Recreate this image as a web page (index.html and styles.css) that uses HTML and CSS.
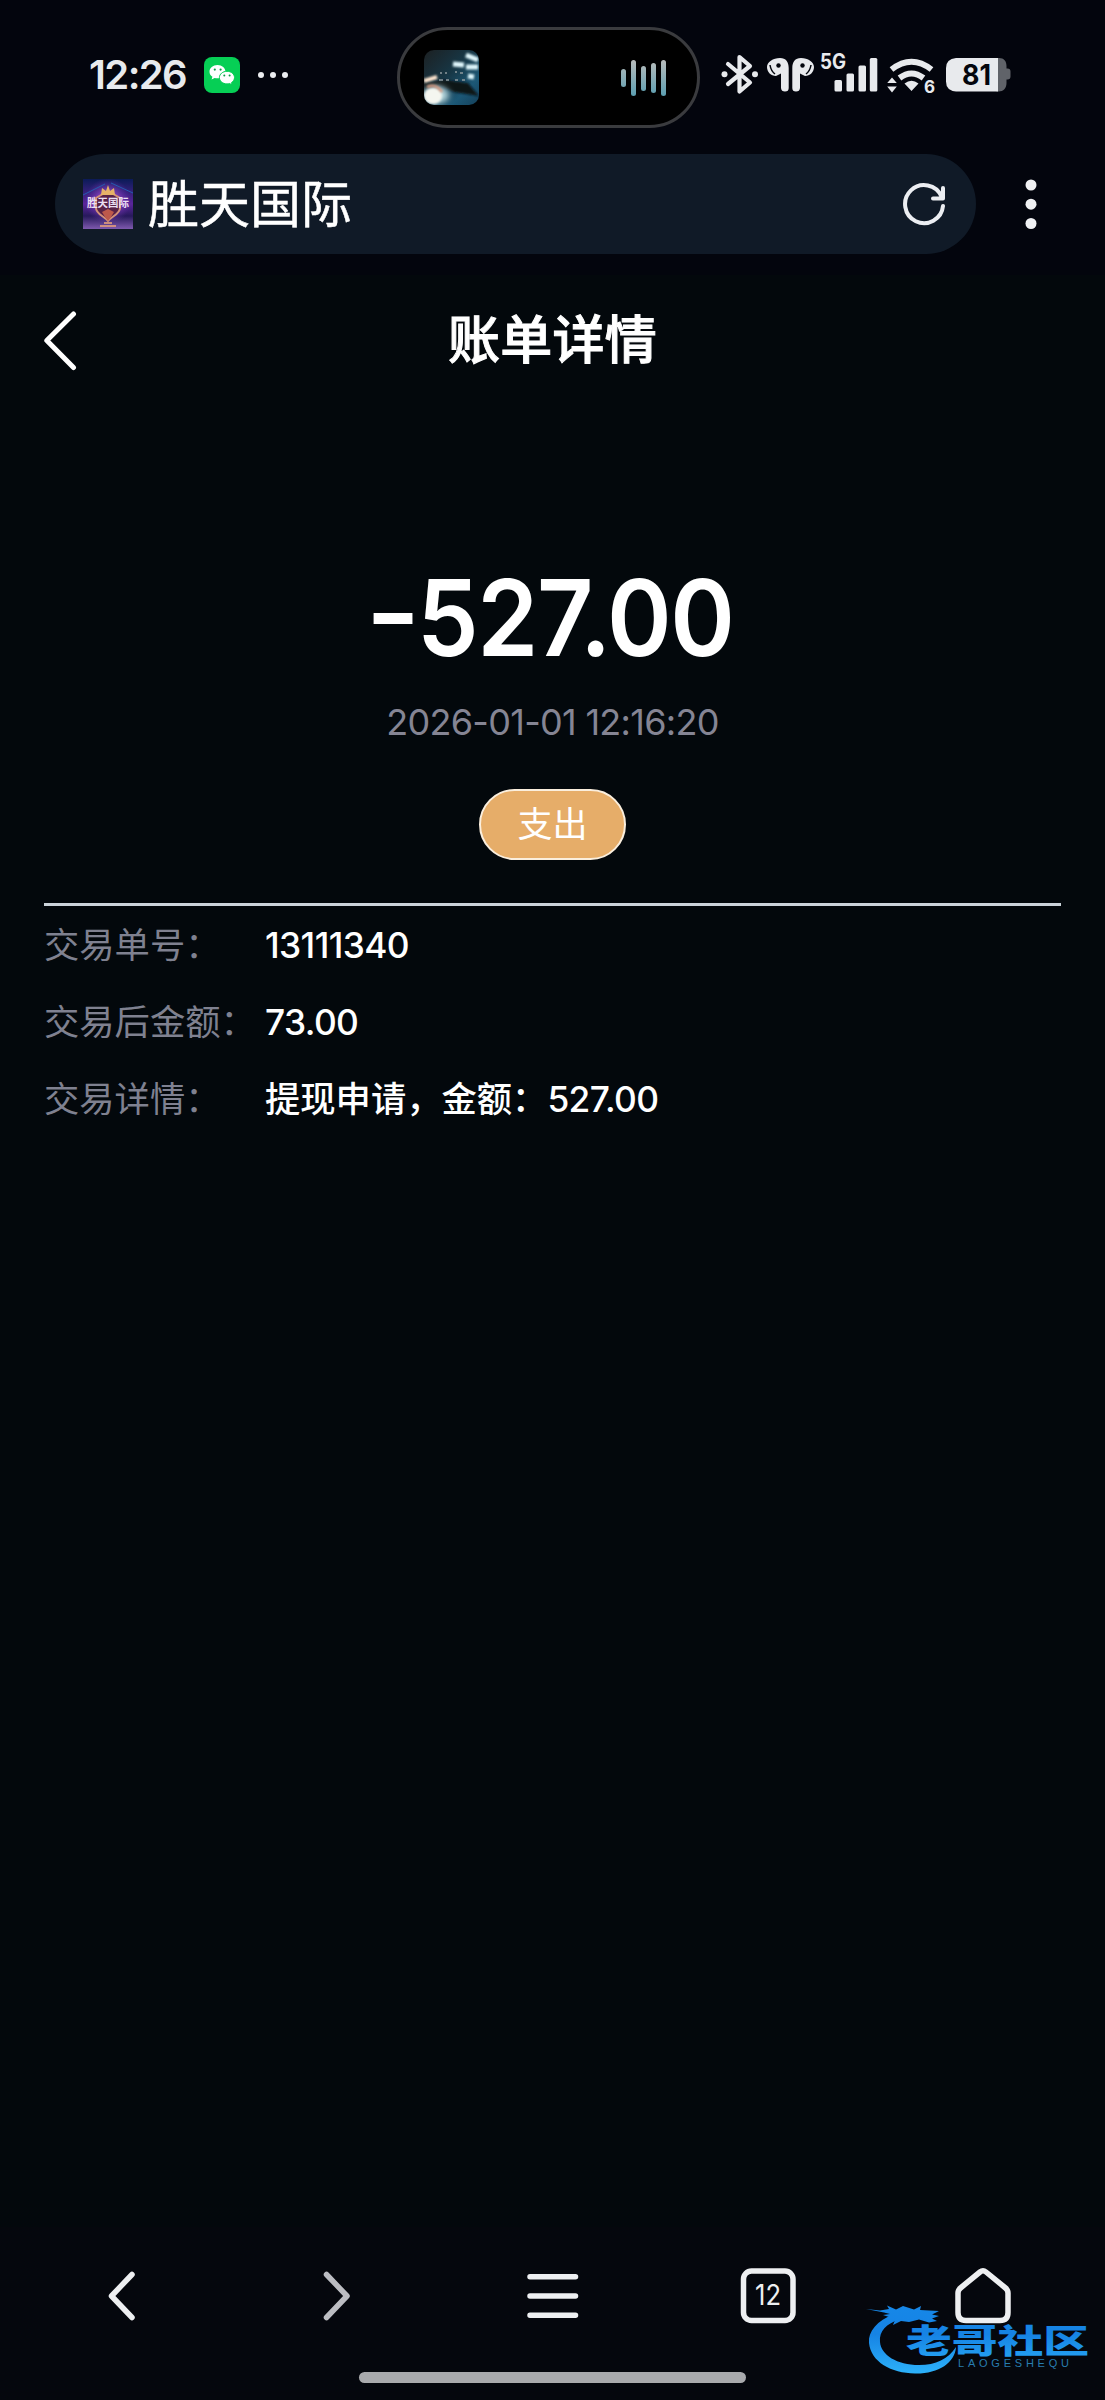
FILE: index.html
```html
<!DOCTYPE html>
<html lang="zh-CN">
<head>
<meta charset="utf-8">
<meta name="viewport" content="width=device-width, initial-scale=1">
<title>账单详情</title>
<link rel="stylesheet" href="styles.css">
</head>
<body>
<div class="phone">
  <header class="chrome">
    <div class="status">
      <div class="status-left">
        <span class="clock">12:26</span>
        <svg class="wechat" width="36" height="36" viewBox="0 0 36 36">
          <rect width="36" height="36" rx="8" fill="#06cf55"/>
          <path d="M13.500 8C8.900 8 5.500 11 5.500 14.700c0 2.100 1.100 3.900 2.900 5.100l-.8 2.700 3-1.600c1 .3 1.900.4 2.900.4 4.500 0 8-3 8-6.600S18 8 13.500 8z" fill="#fff"/>
          <path d="M23 14.300c-4.300 0-7.600 2.800-7.600 6.300s3.300 6.300 7.600 6.300c.9 0 1.800-.1 2.600-.4l2.500 1.400-.6-2.300c1.800-1.200 3-2.900 3-5 0-3.500-3.300-6.300-7.500-6.300z" fill="#fff" stroke="#06cf55" stroke-width="1"/>
          <g fill="#0a9c48"><circle cx="10.800" cy="12.600" r="1.100"/><circle cx="16.600" cy="12.600" r="1.100"/><circle cx="20.300" cy="18.600" r="1"/><circle cx="25.600" cy="18.600" r="1"/></g>
        </svg>
        <svg width="32" height="8" viewBox="0 0 32 8" fill="#eceef0"><circle cx="4" cy="4" r="3"/><circle cx="16" cy="4" r="3"/><circle cx="28" cy="4" r="3"/></svg>
      </div>
      <div class="island">
        <svg width="55" height="55" viewBox="0 0 55 55">
          <defs>
            <clipPath id="art"><rect width="55" height="55" rx="10"/></clipPath>
            <linearGradient id="sea" x1="0" y1="0" x2="1" y2="1"><stop offset="0" stop-color="#1c2022"/><stop offset=".45" stop-color="#173746"/><stop offset=".75" stop-color="#1c5876"/><stop offset="1" stop-color="#14405a"/></linearGradient>
            <filter id="soft" filterUnits="userSpaceOnUse" x="-10" y="-10" width="75" height="75"><feGaussianBlur stdDeviation="1.300"/></filter>
            <filter id="softer" filterUnits="userSpaceOnUse" x="-10" y="-10" width="75" height="75"><feGaussianBlur stdDeviation="3"/></filter>
          </defs>
          <g clip-path="url(#art)">
            <rect width="55" height="55" fill="url(#sea)"/>
            <path d="M0 33L20 30 44 33 55 46 30 42 14 35 0 39z" fill="#0a1318" filter="url(#soft)"/>
            <ellipse cx="12" cy="45" rx="13" ry="9" fill="#b9d9df" filter="url(#softer)"/>
            <ellipse cx="9" cy="46" rx="9" ry="8" fill="#f4f6f0" filter="url(#soft)"/>
            <path d="M3 37q9-4 15 5" stroke="#d99a80" stroke-width="2.500" fill="none" filter="url(#soft)"/>
            <path d="M0 31l13-4" stroke="#ffe6d0" stroke-width="4" filter="url(#soft)"/>
            <path d="M29 14l11 1M42 17l12 0M42 5l12 5M44 26l6 1" stroke="#dff6fb" stroke-width="5" filter="url(#soft)"/>
            <path d="M16 23h2m3 0h2m8-1h2m3 1h3M15 30h4m3 0h3m6 0h3m4 0h3" stroke="#8e999d" stroke-width="1.600"/>
          </g>
        </svg>
        <svg width="46" height="36" viewBox="0 0 46 36">
          <defs><linearGradient id="wave" gradientUnits="userSpaceOnUse" x1="0" y1="0" x2="0" y2="36"><stop offset="0" stop-color="#b9bcbb"/><stop offset="1" stop-color="#5b9eb0"/></linearGradient></defs>
          <g fill="url(#wave)"><rect x="0" y="9" width="5" height="18" rx="2.500"/><rect x="10" y="0" width="5" height="36" rx="2.500"/><rect x="20" y="6" width="5" height="25" rx="2.500"/><rect x="30" y="3" width="5" height="30" rx="2.500"/><rect x="40" y="0" width="5" height="36" rx="2.500"/></g>
        </svg>
      </div>
      <svg class="radios" width="292" height="66" viewBox="720 42 292 66">
        <g fill="none" stroke="#e8eaed" stroke-width="4.200" stroke-linejoin="round" stroke-linecap="round">
          <path d="M728 64L750 82.500 739.500 91.500V57L750 66 728 84"/>
        </g>
        <g fill="#e8eaed">
          <circle cx="724.500" cy="74.300" r="3"/><circle cx="755" cy="74.300" r="3"/>
          <path d="M780 58c6 0 8.700 4 8.700 10v20q0 3.500-3.700 3.500t-4-3.500V73.500l-5 2.500c-5 0-9-4-9-9 0-5 6-9 13-9z"/>
          <path d="M801 58c-6 0-8.700 4-8.700 10v20q0 3.500 3.700 3.500t4-3.500V73.500l5 2.500c5 0 9-4 9-9 0-5-6-9-13-9z"/>
        </g>
        <g fill="#03060d"><circle cx="778.500" cy="65.500" r="2.200"/><circle cx="802.500" cy="65.500" r="2.200"/></g>
        <g fill="none" stroke="#03060d" stroke-width="1.500"><path d="M770 65q1 6 5 9M811 65q-1 6-5 9"/></g>
        <text x="820" y="69" class="net" textLength="26" lengthAdjust="spacingAndGlyphs">5G</text>
        <g fill="#e8eaed"><rect x="834.500" y="80" width="7.500" height="11.500" rx="1.500"/><rect x="846.500" y="73.500" width="7.500" height="18" rx="1.500"/><rect x="858.500" y="65.500" width="7.500" height="26" rx="1.500"/><rect x="869.800" y="58" width="7.500" height="33.500" rx="1.500"/></g>
        <g fill="none" stroke="#e8eaed" stroke-width="6"><path d="M891.500 69.500Q911.500 54 931.500 69.500"/><path d="M899.500 78Q911.500 69 923.500 78"/></g>
        <path d="M911.500 91l-7-7.500q7-5.500 14 0zM892 77.500l4.800 5.500h-9.600zM892 92.500l4.800-6h-9.600z" fill="#e8eaed"/>
        <text x="924" y="92.500" class="gen">6</text>
        <path d="M998 58h1c5 0 7.500 3 7.500 8v2.500h1q3 0 3 3v5q0 3-3 3h-1V83c0 5-3 8.500-8 8.500h-2V58z" fill="#606369"/>
        <path d="M956 58h42v33.500h-42q-10-1-10-10V68q0-9 10-10z" fill="#e8eaed"/>
        <text x="962" y="84.500" class="charge" textLength="29" lengthAdjust="spacingAndGlyphs">81</text>
      </svg>
    </div>
    <div class="toolbar">
      <div class="address">
        <svg class="favicon" width="50" height="50" viewBox="0 0 50 50">
          <defs>
            <linearGradient id="fav" x1="0" y1="0" x2="0" y2="1"><stop offset="0" stop-color="#0b1b57"/><stop offset=".5" stop-color="#5a259b"/><stop offset=".74" stop-color="#27195c"/><stop offset="1" stop-color="#7e59ae"/></linearGradient>
            <radialGradient id="glow"><stop offset="0" stop-color="#df74e6"/><stop offset="1" stop-color="#7130bc" stop-opacity="0"/></radialGradient>
          </defs>
          <rect width="50" height="50" fill="url(#fav)"/>
          <circle cx="25" cy="22" r="23" fill="url(#glow)"/>
          <path d="M0 16L22 5M28 4L50 14" stroke="#245cb0" stroke-width="1"/>
          <path d="M13 19l12-7 12 7v10c0 6-8 8-12 13-4-5-12-7-12-13z" fill="#582247" stroke="#d29078" stroke-width="2"/>
          <path d="M18 16l1-7 4 3 2-6 2 6 4-3 1 7z" fill="#e7b268"/>
          <path d="M19 33l6-3 6 3-3 5-3 4-3-4z" fill="#bd594b"/>
          <text x="4" y="28" class="mark" textLength="42" lengthAdjust="spacingAndGlyphs">胜天国际</text>
          <path d="M17 47h16M21 44h8" stroke="#f1a77a" stroke-width="1.500"/>
        </svg>
        <span class="site">胜天国际</span>
        <svg width="46" height="46" viewBox="900 181 46 46" fill="none" stroke="#eceef2" stroke-width="4" stroke-linecap="round" stroke-linejoin="round"><path d="M942 206A19 19 0 1 1 940.500 196.500M942 188v10.500h-10"/></svg>
      </div>
      <svg class="more" width="12" height="50" viewBox="0 0 12 50" fill="#f0f1f3"><circle cx="6" cy="6" r="5.500"/><circle cx="6" cy="25.200" r="5.500"/><circle cx="6" cy="44.500" r="5.500"/></svg>
    </div>
  </header>

  <main class="page">
    <div class="titlebar">
      <svg class="back" width="34" height="60" viewBox="0 0 34 60" fill="none" stroke="#fff" stroke-width="5" stroke-linecap="round" stroke-linejoin="round"><path d="M29.500 3L2.800 29.500l26.700 27"/></svg>
      <h1>账单详情</h1>
    </div>
    <section class="summary">
      <div class="amount"><span class="minus"></span>527.00</div>
      <time class="date">2026-01-01 12:16:20</time>
      <span class="tag">支出</span>
    </section>
    <dl class="details">
      <div class="row"><dt>交易单号：</dt><dd><span class="num">13111340</span></dd></div>
      <div class="row"><dt>交易后金额：</dt><dd><span class="num">73.00</span></dd></div>
      <div class="row"><dt>交易详情：</dt><dd>提现申请，金额：<span class="num">527.00</span></dd></div>
    </dl>
  </main>

  <footer class="dock">
    <nav class="navbar">
      <svg viewBox="0 0 60 60"><path d="M40 8.500L19.500 30 40 51.500"/></svg>
      <svg class="dim" viewBox="0 0 60 60"><path d="M19.500 8.500L40 30 19.500 51.500"/></svg>
      <svg viewBox="0 0 60 60"><path d="M7 10.700h45.500M7 30h45.500M7 49.300h45.500"/></svg>
      <svg viewBox="0 0 60 60"><rect x="5.500" y="5" width="49.500" height="49.500" rx="8"/><text x="30" y="38.500" class="tabs" textLength="26" lengthAdjust="spacingAndGlyphs">12</text></svg>
      <svg viewBox="0 0 60 60"><path d="M5 27q0-3 2.500-5L27 6q3-2.500 6 0L52.500 22q2.500 2 2.500 5v19.500q0 8-8 8H13q-8 0-8-8z"/></svg>
    </nav>
    <div class="home-indicator"></div>
  </footer>

  <svg class="watermark" width="230" height="80" viewBox="862 2296 230 80">
    <defs><linearGradient id="blue" gradientUnits="userSpaceOnUse" x1="0" y1="2302" x2="0" y2="2374"><stop offset="0" stop-color="#1688e8"/><stop offset=".45" stop-color="#1683e4"/><stop offset="1" stop-color="#2db2fa"/></linearGradient></defs>
    <g fill="url(#blue)">
      <path d="M894 2314C877 2321 868 2331 869 2343C871 2362 891 2373 915 2373.500C938 2374 955 2363 956 2347C948 2359 936 2365 919 2365C897 2365 881 2355 880 2342C879 2331 886 2324 900 2319z"/>
      <path d="M866 2309L880 2310.500 889 2309 887 2305.500 896 2309.500 903 2306 914 2309.500 921 2306 920 2310 939 2311 932 2314.500 939 2316 932 2318.500 937 2321 929 2322.500 919 2319.500 909 2322 901 2321 893 2325 895 2320 885 2322 889 2317 883 2315 890 2314 884 2312.500z"/>
      <text x="906" y="2353" class="brand" textLength="183" lengthAdjust="spacingAndGlyphs">老哥社区</text>
    </g>
    <text x="958" y="2367" class="pinyin" textLength="111">LAOGESHEQU</text>
  </svg>
</div>
</body>
</html>
```
FILE: styles.css
```css
* { box-sizing: border-box; margin: 0; padding: 0; }
body { background: #03080c; color: #fff; font-family: Inter, "Noto Sans CJK SC", sans-serif; }
svg { display: block; flex: none; }

.phone { position: relative; display: flex; flex-direction: column; width: 1105px; height: 2400px; overflow: hidden; }

.chrome { height: 275px; background: #03050d; }
.status { display: flex; align-items: center; height: 154px; padding: 1px 93px 0 89px; }
.status-left { display: flex; align-items: center; width: 308px; height: 36px; margin-top: -6px; }
.clock { width: 115px; font-size: 40px; font-weight: 600; letter-spacing: -1.600px; color: #e8eaed; }
.wechat { margin-right: 17px; }
.island { display: flex; align-items: center; justify-content: space-between; width: 303px; height: 101px; padding: 0 30px 0 24px; border: 3px solid #3a3b3e; border-radius: 51px; background: #000; }
.radios { margin: -6px 0 0 20px; }
.net { font: 700 21px Inter, sans-serif; fill: #e8eaed; }
.gen { font: 700 17px Inter, sans-serif; fill: #e8eaed; }
.charge { font: 700 29px Inter, sans-serif; fill: #03060d; }

.toolbar { display: flex; align-items: center; height: 100px; padding-left: 55px; }
.address { display: flex; align-items: center; width: 921px; height: 100px; padding: 0 29px 0 28px; border-radius: 50px; background: #101a27; }
.site { flex: 1; padding-left: 15px; padding-top: 1px; font-size: 51px; line-height: 74px; -webkit-text-stroke: .5px #fff; }
.more { margin-left: 49px; }
.mark { font: 700 11px "Noto Sans CJK SC", sans-serif; fill: #eadff2; }

.page { flex: 1; padding: 0 44px; }
.titlebar { display: grid; grid-template-columns: 34px 1fr 34px; align-items: center; height: 132px; }
.titlebar h1 { text-align: center; font-size: 52px; font-weight: 500; line-height: 76px; letter-spacing: .3px; -webkit-text-stroke: 1px #fff; }
.summary { display: flex; flex-direction: column; align-items: center; height: 496px; padding-top: 147px; }
.amount { display: flex; align-items: center; font-size: 106px; font-weight: 600; line-height: 128px; letter-spacing: -1.500px; transform: translateX(1px) scaleX(.925); }
.minus { width: 42px; height: 11px; margin-right: 5px; background: #fff; }
.date { margin-top: 16px; font-size: 36px; line-height: 48px; letter-spacing: -.7px; color: #858594; }
.tag { display: grid; place-items: center; width: 147px; height: 71px; margin-top: 43px; padding-bottom: 1px; border: 2px solid #faeedd; border-radius: 36px; background: #e6ad69; font-size: 35px; line-height: 50px; }
.details { padding-top: 2px; border-top: 3px solid #cbd3da; }
.row { display: flex; align-items: center; height: 76.700px; font-size: 35.300px; line-height: 52px; }
.row dt { width: 221px; white-space: nowrap; color: #7f8190; }
.row dd { font-weight: 500; }
.num { letter-spacing: -.6px; }

.dock { height: 173px; background: #05070d; }
.navbar { display: flex; justify-content: space-between; padding: 0 92px; height: 138px; align-items: center; }
.navbar svg { width: 60px; height: 60px; fill: none; stroke: #eeeff1; stroke-width: 5.500; stroke-linecap: round; stroke-linejoin: round; }
.navbar .dim { stroke: #bcbdc2; }
.navbar .tabs { font: 400 29px Inter, sans-serif; fill: #eeeff1; stroke: none; text-anchor: middle; }
.home-indicator { width: 387px; height: 11px; margin: 7px auto 0; border-radius: 6px; background: #a9aaad; }

.watermark { position: absolute; left: 862px; top: 2296px; }
.brand { font: 900 33px "Noto Sans CJK SC", sans-serif; }
.pinyin { font: 400 11px "Liberation Sans", sans-serif; fill: #287daf; }
```
